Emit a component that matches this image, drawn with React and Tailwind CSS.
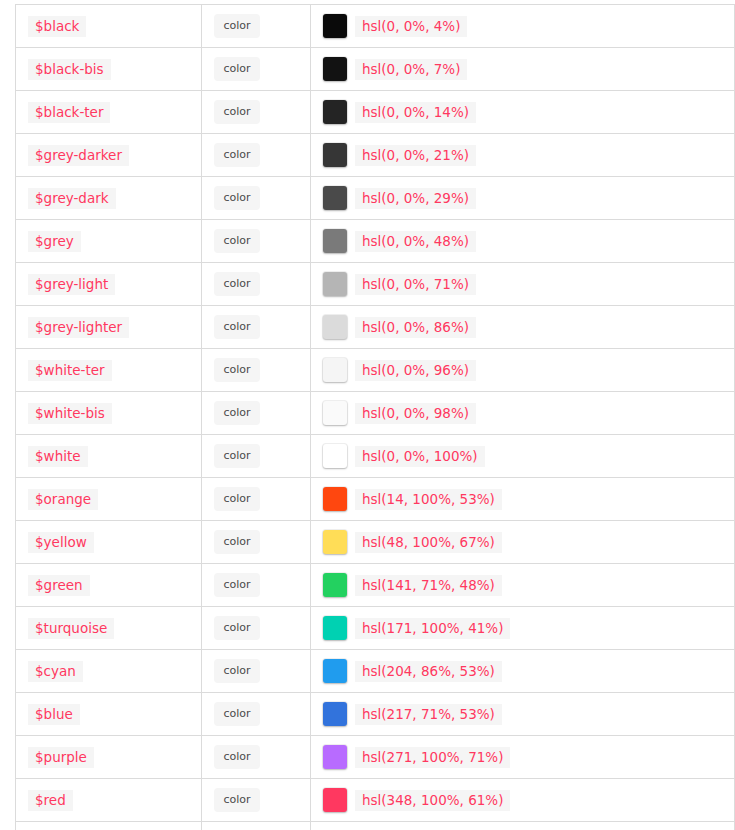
const rows = [
  { name: '$black', type: 'color', value: 'hsl(0, 0%, 4%)', swatch: 'bg-[#0a0a0a]' },
  { name: '$black-bis', type: 'color', value: 'hsl(0, 0%, 7%)', swatch: 'bg-[#121212]' },
  { name: '$black-ter', type: 'color', value: 'hsl(0, 0%, 14%)', swatch: 'bg-[#242424]' },
  { name: '$grey-darker', type: 'color', value: 'hsl(0, 0%, 21%)', swatch: 'bg-[#363636]' },
  { name: '$grey-dark', type: 'color', value: 'hsl(0, 0%, 29%)', swatch: 'bg-[#4a4a4a]' },
  { name: '$grey', type: 'color', value: 'hsl(0, 0%, 48%)', swatch: 'bg-[#7a7a7a]' },
  { name: '$grey-light', type: 'color', value: 'hsl(0, 0%, 71%)', swatch: 'bg-[#b5b5b5]' },
  { name: '$grey-lighter', type: 'color', value: 'hsl(0, 0%, 86%)', swatch: 'bg-[#dbdbdb]' },
  { name: '$white-ter', type: 'color', value: 'hsl(0, 0%, 96%)', swatch: 'bg-[#f5f5f5]' },
  { name: '$white-bis', type: 'color', value: 'hsl(0, 0%, 98%)', swatch: 'bg-[#fafafa]' },
  { name: '$white', type: 'color', value: 'hsl(0, 0%, 100%)', swatch: 'bg-white' },
  { name: '$orange', type: 'color', value: 'hsl(14, 100%, 53%)', swatch: 'bg-[#ff470f]' },
  { name: '$yellow', type: 'color', value: 'hsl(48, 100%, 67%)', swatch: 'bg-[#ffdd57]' },
  { name: '$green', type: 'color', value: 'hsl(141, 71%, 48%)', swatch: 'bg-[#23d160]' },
  { name: '$turquoise', type: 'color', value: 'hsl(171, 100%, 41%)', swatch: 'bg-[#00d1b2]' },
  { name: '$cyan', type: 'color', value: 'hsl(204, 86%, 53%)', swatch: 'bg-[#209cee]' },
  { name: '$blue', type: 'color', value: 'hsl(217, 71%, 53%)', swatch: 'bg-[#3273dc]' },
  { name: '$purple', type: 'color', value: 'hsl(271, 100%, 71%)', swatch: 'bg-[#b86bff]' },
  { name: '$red', type: 'color', value: 'hsl(348, 100%, 61%)', swatch: 'bg-[#ff3860]' },
  { name: '$family-sans-serif', type: 'string', value: 'BlinkMacSystemFont, -apple-system, "Segoe UI"', swatch: null },
];

function Code({ children }) {
  return (
    <code className="inline-block bg-[#f5f5f5] px-[7px] py-[3px] text-[13.5px] leading-[15px] text-[#ff3860] whitespace-nowrap font-['DejaVu_Sans',sans-serif]">
      {children}
    </code>
  );
}

export default function App() {
  return (
    <div className="min-h-screen bg-white pt-[4px] pl-[15px] font-['DejaVu_Sans',sans-serif]">
      <div className="w-[720px] border-t border-x border-[#dbdbdb]">
        {rows.map((row) => (
          <div
            key={row.name}
            className="grid h-[43px] grid-cols-[185px_109px_1fr] border-b border-[#dbdbdb]"
          >
            <div className="flex items-center pl-3">
              <Code>{row.name}</Code>
            </div>
            <div className="flex items-center border-l border-[#dbdbdb] pl-3">
              <span className="flex h-6 w-[46px] items-center justify-center rounded bg-[#f5f5f5] text-[11px] text-[#4a4a4a]">
                {row.type}
              </span>
            </div>
            <div className="flex items-center gap-2 border-l border-[#dbdbdb] pl-3">
              {row.swatch && (
                <span
                  className={`h-6 w-6 rounded-[3px] shadow-[0_1px_2px_rgba(10,10,10,0.25),0_0_0_1px_rgba(10,10,10,0.06)] ${row.swatch}`}
                />
              )}
              <Code>{row.value}</Code>
            </div>
          </div>
        ))}
      </div>
    </div>
  );
}
